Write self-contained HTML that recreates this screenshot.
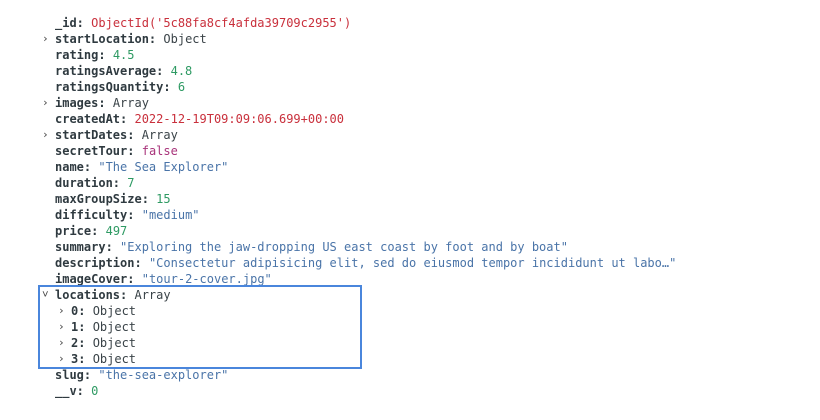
<!DOCTYPE html>
<html><head><style>
body{margin:0;background:#fff;width:820px;height:420px;overflow:hidden;font-family:"DejaVu Sans Mono","Liberation Mono",monospace;font-size:12px;color:#2c3438}
.l{position:absolute;left:55px;height:16px;line-height:16px;white-space:pre}
.k{font-weight:bold;color:#2f3a40}
.s{color:#4a74a8}.n{color:#2e9a63}.r{color:#c9303c}.b{color:#a8337a}.o{color:#3a4348}
.a{position:absolute;left:-13px;top:0;color:#444;font-size:11px}
.box{position:absolute;left:38px;top:285px;width:320px;height:80px;border:2px solid #4a86dc}
</style></head><body>
<div class="l" style="top:15px"><span class="k">_id:</span> <span class="r">ObjectId('5c88fa8cf4afda39709c2955')</span></div>
<div class="l" style="top:31px"><span class="a">›</span><span class="k">startLocation:</span> <span class="o">Object</span></div>
<div class="l" style="top:47px"><span class="k">rating:</span> <span class="n">4.5</span></div>
<div class="l" style="top:63px"><span class="k">ratingsAverage:</span> <span class="n">4.8</span></div>
<div class="l" style="top:79px"><span class="k">ratingsQuantity:</span> <span class="n">6</span></div>
<div class="l" style="top:95px"><span class="a">›</span><span class="k">images:</span> <span class="o">Array</span></div>
<div class="l" style="top:111px"><span class="k">createdAt:</span> <span class="r">2022-12-19T09:09:06.699+00:00</span></div>
<div class="l" style="top:127px"><span class="a">›</span><span class="k">startDates:</span> <span class="o">Array</span></div>
<div class="l" style="top:143px"><span class="k">secretTour:</span> <span class="b">false</span></div>
<div class="l" style="top:159px"><span class="k">name:</span> <span class="s">"The Sea Explorer"</span></div>
<div class="l" style="top:175px"><span class="k">duration:</span> <span class="n">7</span></div>
<div class="l" style="top:191px"><span class="k">maxGroupSize:</span> <span class="n">15</span></div>
<div class="l" style="top:207px"><span class="k">difficulty:</span> <span class="s">"medium"</span></div>
<div class="l" style="top:223px"><span class="k">price:</span> <span class="n">497</span></div>
<div class="l" style="top:239px"><span class="k">summary:</span> <span class="s">"Exploring the jaw-dropping US east coast by foot and by boat"</span></div>
<div class="l" style="top:255px"><span class="k">description:</span> <span class="s">"Consectetur adipisicing elit, sed do eiusmod tempor incididunt ut labo…"</span></div>
<div class="l" style="top:271px"><span class="k">imageCover:</span> <span class="s">"tour-2-cover.jpg"</span></div>
<div class="box"></div>
<div class="l" style="top:287px"><span class="a">˅</span><span class="k">locations:</span> <span class="o">Array</span></div>
<div class="l" style="top:303px;left:71px"><span class="a">›</span><span class="k">0:</span> <span class="o">Object</span></div>
<div class="l" style="top:319px;left:71px"><span class="a">›</span><span class="k">1:</span> <span class="o">Object</span></div>
<div class="l" style="top:335px;left:71px"><span class="a">›</span><span class="k">2:</span> <span class="o">Object</span></div>
<div class="l" style="top:351px;left:71px"><span class="a">›</span><span class="k">3:</span> <span class="o">Object</span></div>
<div class="l" style="top:367px"><span class="k">slug:</span> <span class="s">"the-sea-explorer"</span></div>
<div class="l" style="top:383px"><span class="k">__v:</span> <span class="n">0</span></div>
</body></html>
